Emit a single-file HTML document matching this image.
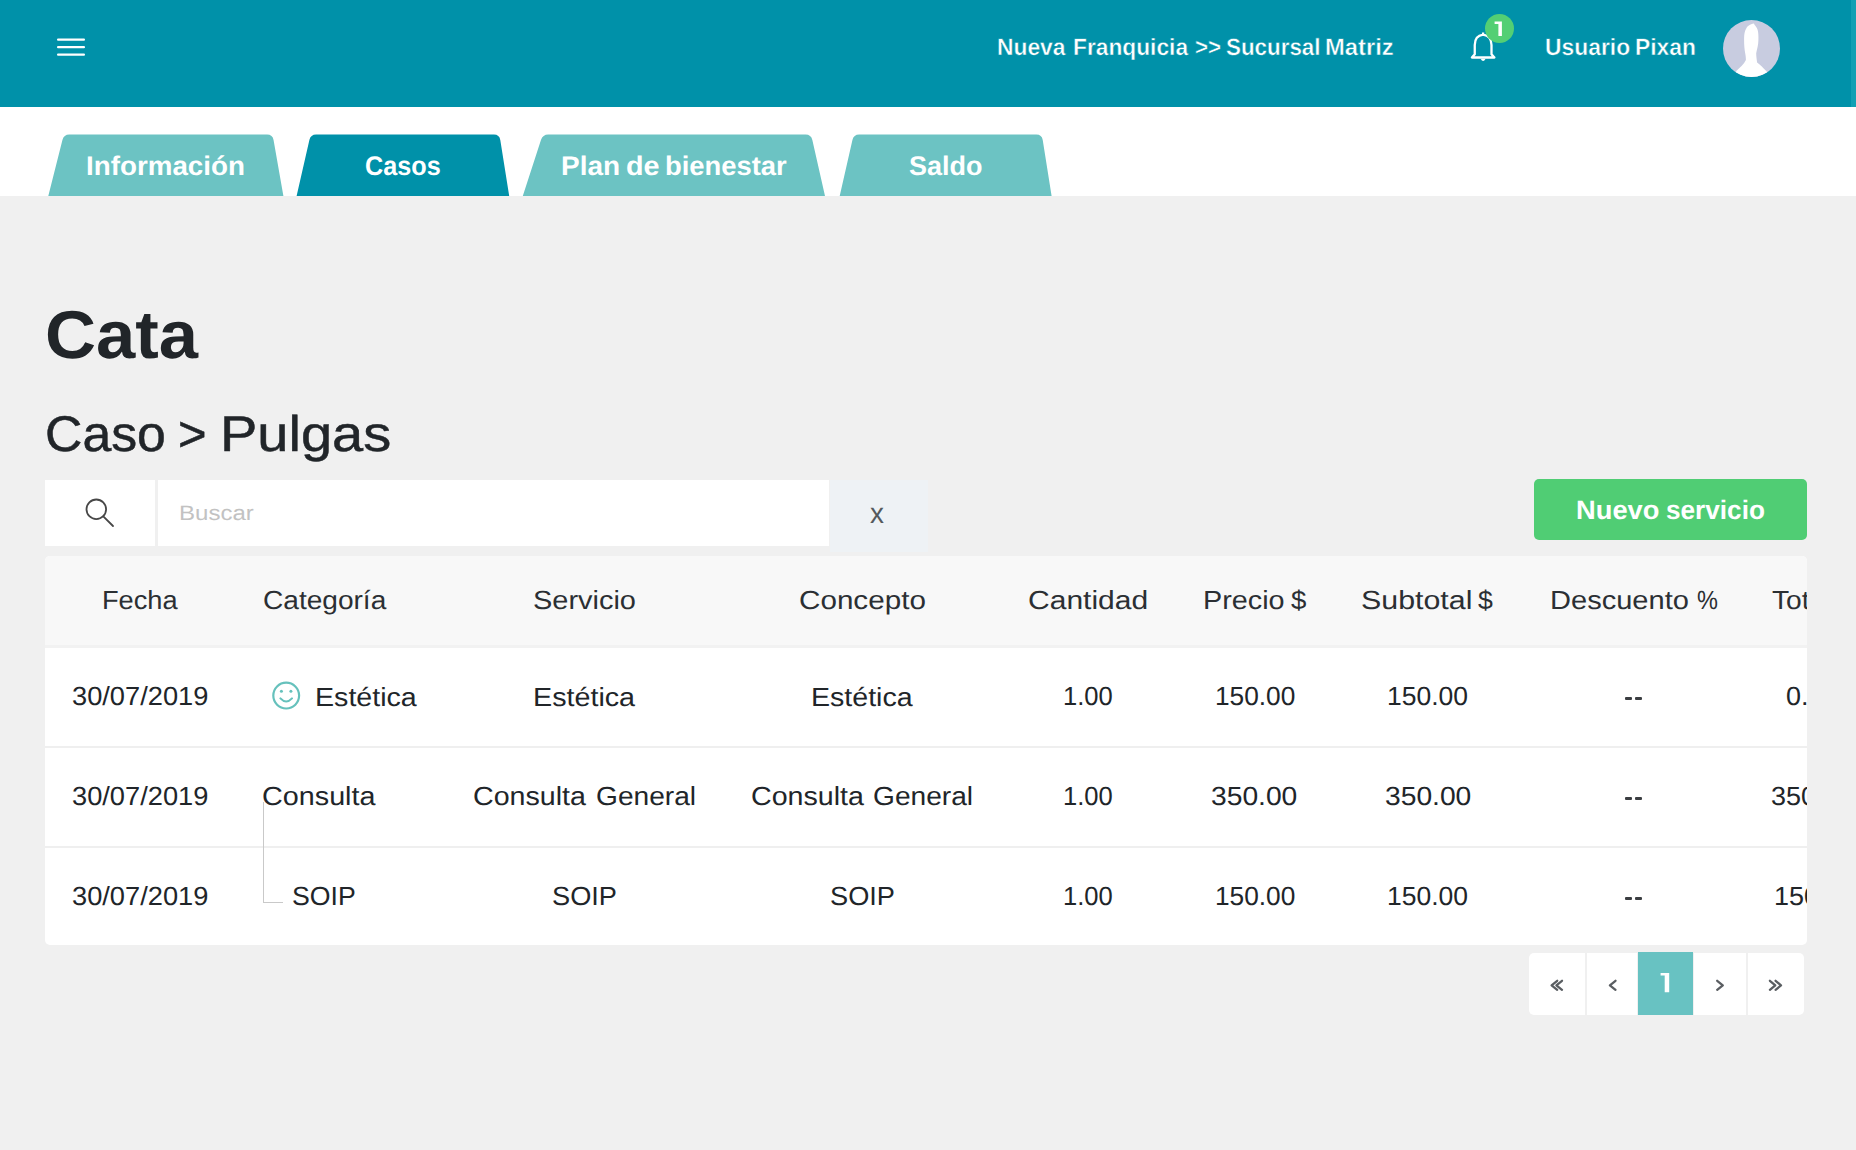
<!DOCTYPE html>
<html><head><meta charset="utf-8"><title>Caso &gt; Pulgas</title>
<style>
html,body{margin:0;padding:0}
body{width:1856px;height:1150px;position:relative;overflow:hidden;background:#f0f0f0;font-family:"Liberation Sans",sans-serif;text-rendering:geometricPrecision}
.abs{position:absolute}
.t{position:absolute;white-space:nowrap;transform-origin:0 0}
.hdr{position:absolute;left:0;top:0;width:1856px;height:106.7px;background:#0091a9}
.hdr-edge{position:absolute;left:1851px;top:0;width:5px;height:106.7px;background:#12a0b4}
.tabbar{position:absolute;left:0;top:106.7px;width:1856px;height:89.3px;background:#fff}
.ham{position:absolute;left:57px;width:27px;height:2.6px;border-radius:1.3px;background:#fff}
.card{position:absolute;left:45px;top:556px;width:1761.5px;height:388.5px;background:#fff;border-radius:5px;overflow:hidden}
.thead{position:absolute;left:0;top:0;width:100%;height:89px;background:#f8f8f8;border-bottom:3px solid #f2f2f2}
.sep{position:absolute;left:0;width:100%;height:1.5px;background:#efefef}
.dash{position:absolute;width:7.2px;height:3.2px;border-radius:1px;background:#3b3e41}
.pg{position:absolute;top:953px;height:62px;background:#fff}
</style></head><body>
<div class="hdr"></div>
<div class="hdr-edge"></div>
<svg class="abs" style="left:50px;top:30px" width="40" height="35" viewBox="0 0 40 35"><g stroke="#fff" stroke-width="2.3" stroke-linecap="round"><line x1="8.1" y1="9.7" x2="33.9" y2="9.7"/><line x1="8.1" y1="17.2" x2="33.9" y2="17.2"/><line x1="8.1" y1="24.7" x2="33.9" y2="24.7"/></g></svg>
<svg class="abs" style="left:1465px;top:28px" width="40" height="40" viewBox="0 0 40 40">
  <path d="M18.1,4.6 L18.1,6.6 C13,7.3 9.75,11 9.75,17 L9.75,26.2 L6.9,29.5 L29.4,29.5 L26.5,26.2 L26.5,17 C26.5,11 23.2,7.3 18.1,6.6" fill="none" stroke="#fff" stroke-width="2.3" stroke-linejoin="round"/>
  <path d="M15.6,30.8 Q18.1,35.2 20.6,30.8 Z" fill="#fff"/>
</svg>
<svg class="abs" style="left:1485px;top:13.6px" width="29" height="29" viewBox="0 0 29 29"><circle cx="14.5" cy="14.5" r="14.5" fill="#53cf74"/>
  <path d="M9.6,7.4 L16.9,7.4 L16.9,22.1 L13.4,22.1 L13.4,10.1 L9.6,10.1 Z" fill="#fff"/></svg>
<svg class="abs" style="left:1723px;top:19.5px" width="57" height="57" viewBox="0 0 57 57">
  <defs><clipPath id="avc"><circle cx="28.5" cy="28.5" r="28.5"/></clipPath></defs>
  <circle cx="28.5" cy="28.5" r="28.5" fill="#c8cce0"/>
  <path clip-path="url(#avc)" d="M31,3.4 C27,4 24.1,6.3 23.5,8 C21.6,11 21.2,14 21.1,18 C21,24 21.4,29 22.2,33.2 C22.8,36.5 22.9,38.5 22.9,40 C21,44 17,47.5 13.5,50.7 L10,60 L48,60 L43.5,51.3 C40,48 37,44.5 34.1,42.6 C33.6,38.5 33.2,36 33.2,33.2 C34,29 35.4,25 35.4,20 C35.5,15 35.4,12.5 34.5,9.5 C33.8,7.5 32.6,6 31.6,5 Z" fill="#fff"/>
</svg>
<div class="tabbar"></div>
<svg class="abs" style="left:0;top:0" width="1856" height="200" viewBox="0 0 1856 200"><path d="M48.3,196 L62.43,140.0 Q63.82,134.5 69.32,134.5 L267.09,134.5 Q272.59,134.5 273.55,140.0 L283.4,196 Z" fill="#6cc3c3"/><path d="M296.6,196 L309.38,140.0 Q310.63,134.5 316.13,134.5 L493.92,134.5 Q499.42,134.5 500.29,140.0 L509.2,196 Z" fill="#0091a9"/><path d="M522.8,196 L540.96,140.0 Q542.75,134.5 548.25,134.5 L805.60,134.5 Q811.10,134.5 812.34,140.0 L825.0,196 Z" fill="#6cc3c3"/><path d="M839.7,196 L852.43,140.0 Q853.69,134.5 859.19,134.5 L1036.35,134.5 Q1041.85,134.5 1042.72,140.0 L1051.6,196 Z" fill="#6cc3c3"/></svg>
<div class="abs" style="left:44.6px;top:480.2px;width:110px;height:66.3px;background:#fff"></div>
<svg class="abs" style="left:80px;top:494px" width="40" height="40" viewBox="0 0 40 40">
  <circle cx="16.3" cy="15.3" r="9.8" fill="none" stroke="#474747" stroke-width="1.8"/>
  <line x1="23.3" y1="22.3" x2="33" y2="32" stroke="#474747" stroke-width="1.8" stroke-linecap="round"/>
</svg>
<div class="abs" style="left:157.8px;top:480.2px;width:671px;height:66px;background:#fff"></div>
<div class="abs" style="left:830px;top:479.7px;width:97.7px;height:72px;background:#eef2f5"></div>
<div class="abs" style="left:1534px;top:478.6px;width:272.5px;height:61.4px;background:#50cd74;border-radius:5px"></div>
<div class="t" style="left:996.94px;top:37.10px;font-size:23.6px;line-height:23.6px;font-weight:bold;-webkit-text-stroke:0.45px #0091a9;color:#ffffff;transform:scaleX(0.9675)">Nueva</div><div class="t" style="left:1072.75px;top:37.10px;font-size:23.6px;line-height:23.6px;font-weight:bold;-webkit-text-stroke:0.45px #0091a9;color:#ffffff;transform:scaleX(0.9642)">Franquicia</div><div class="t" style="left:1194.86px;top:37.10px;font-size:23.6px;line-height:23.6px;font-weight:bold;-webkit-text-stroke:0.45px #0091a9;color:#ffffff;transform:scaleX(0.9434)">>></div><div class="t" style="left:1225.99px;top:37.10px;font-size:23.6px;line-height:23.6px;font-weight:bold;-webkit-text-stroke:0.45px #0091a9;color:#ffffff;transform:scaleX(0.9479)">Sucursal</div><div class="t" style="left:1325.28px;top:37.10px;font-size:23.6px;line-height:23.6px;font-weight:bold;-webkit-text-stroke:0.45px #0091a9;color:#ffffff;transform:scaleX(1.0074)">Matriz</div><div class="t" style="left:1544.88px;top:37.20px;font-size:23.6px;line-height:23.6px;font-weight:bold;-webkit-text-stroke:0.45px #0091a9;color:#ffffff;transform:scaleX(0.9687)">Usuario</div><div class="t" style="left:1634.84px;top:37.20px;font-size:23.6px;line-height:23.6px;font-weight:bold;-webkit-text-stroke:0.45px #0091a9;color:#ffffff;transform:scaleX(0.9679)">Pixan</div><div class="t" style="left:86.17px;top:152.50px;font-size:26.9px;line-height:26.9px;font-weight:bold;color:#ffffff;transform:scaleX(1.0326)">Información</div><div class="t" style="left:365.12px;top:152.50px;font-size:26.9px;line-height:26.9px;font-weight:bold;color:#ffffff;transform:scaleX(0.9376)">Casos</div><div class="t" style="left:560.96px;top:152.50px;font-size:26.9px;line-height:26.9px;font-weight:bold;color:#ffffff;transform:scaleX(1.0410)">Plan</div><div class="t" style="left:625.80px;top:152.50px;font-size:26.9px;line-height:26.9px;font-weight:bold;color:#ffffff;transform:scaleX(1.0707)">de</div><div class="t" style="left:665.10px;top:152.50px;font-size:26.9px;line-height:26.9px;font-weight:bold;color:#ffffff;transform:scaleX(1.0183)">bienestar</div><div class="t" style="left:909.14px;top:152.50px;font-size:26.9px;line-height:26.9px;font-weight:bold;color:#ffffff;transform:scaleX(1.0032)">Saldo</div><div class="t" style="left:45.29px;top:302.20px;font-size:67.6px;line-height:67.6px;font-weight:bold;color:#212529;transform:scaleX(1.0450)">Cata</div><div class="t" style="left:44.74px;top:409.20px;font-size:50.1px;line-height:50.1px;-webkit-text-stroke:0.5px #212529;color:#212529;transform:scaleX(1.0336)">Caso</div><div class="t" style="left:178.38px;top:409.20px;font-size:50.1px;line-height:50.1px;-webkit-text-stroke:0.5px #212529;color:#212529;transform:scaleX(0.9748)">></div><div class="t" style="left:219.98px;top:409.20px;font-size:50.1px;line-height:50.1px;-webkit-text-stroke:0.5px #212529;color:#212529;transform:scaleX(1.1178)">Pulgas</div><div class="t" style="left:179.02px;top:504.31px;font-size:20.8px;line-height:20.8px;color:#c2c2c2;transform:scaleX(1.1561)">Buscar</div><div class="t" style="left:869.63px;top:499.50px;font-size:28.7px;line-height:28.7px;color:#555a5e;transform:scaleX(0.9716)">x</div><div class="t" style="left:1576.00px;top:496.80px;font-size:26.7px;line-height:26.7px;font-weight:bold;color:#ffffff;transform:scaleX(1.0227)">Nuevo</div><div class="t" style="left:1665.78px;top:496.80px;font-size:26.7px;line-height:26.7px;font-weight:bold;color:#ffffff;transform:scaleX(0.9806)">servicio</div>
<div class="card">
  <div class="thead"></div>
  <div class="sep" style="top:190px"></div>
  <div class="sep" style="top:290px"></div>
  <svg class="abs" style="left:226px;top:125.39999999999998px" width="30" height="30" viewBox="0 0 30 30">
    <circle cx="15.2" cy="14.6" r="12.9" fill="none" stroke="#66c1bc" stroke-width="2.2"/>
    <circle cx="10.4" cy="10.2" r="1.5" fill="#66c1bc"/>
    <circle cx="19.9" cy="10.2" r="1.5" fill="#66c1bc"/>
    <path d="M9.4,17.4 Q15.2,23.6 21,17.4" fill="none" stroke="#66c1bc" stroke-width="2.1" stroke-linecap="round"/>
  </svg>
  <div class="abs" style="left:218px;top:246px;width:1.3px;height:100.5px;background:#c9c9c9"></div>
  <div class="abs" style="left:218px;top:345.5px;width:20px;height:1.3px;background:#c9c9c9"></div>
  <div class="t" style="left:56.79px;top:31.10px;font-size:26.2px;line-height:26.2px;color:#2b2f33;transform:scaleX(1.0388)">Fecha</div><div class="t" style="left:217.99px;top:31.10px;font-size:26.2px;line-height:26.2px;color:#2b2f33;transform:scaleX(1.0720)">Categoría</div><div class="t" style="left:488.34px;top:31.10px;font-size:26.2px;line-height:26.2px;color:#2b2f33;transform:scaleX(1.1054)">Servicio</div><div class="t" style="left:753.81px;top:31.10px;font-size:26.2px;line-height:26.2px;color:#2b2f33;transform:scaleX(1.1318)">Concepto</div><div class="t" style="left:983.19px;top:31.10px;font-size:26.2px;line-height:26.2px;color:#2b2f33;transform:scaleX(1.1469)">Cantidad</div><div class="t" style="left:1157.87px;top:31.10px;font-size:26.2px;line-height:26.2px;color:#2b2f33;transform:scaleX(1.0996)">Precio</div><div class="t" style="left:1245.97px;top:31.10px;font-size:26.2px;line-height:26.2px;color:#2b2f33;transform:scaleX(1.0552)">$</div><div class="t" style="left:1316.16px;top:31.10px;font-size:26.2px;line-height:26.2px;color:#2b2f33;transform:scaleX(1.1591)">Subtotal</div><div class="t" style="left:1433.48px;top:31.10px;font-size:26.2px;line-height:26.2px;color:#2b2f33;transform:scaleX(1.0188)">$</div><div class="t" style="left:1504.65px;top:31.10px;font-size:26.2px;line-height:26.2px;color:#2b2f33;transform:scaleX(1.1096)">Descuento</div><div class="t" style="left:1651.53px;top:31.10px;font-size:26.2px;line-height:26.2px;color:#2b2f33;transform:scaleX(0.8995)">%</div><div class="t" style="left:1726.72px;top:31.10px;font-size:26.2px;line-height:26.2px;color:#2b2f33;transform:scaleX(1.0761)">Total $</div><div class="t" style="left:26.70px;top:127.20px;font-size:26.2px;line-height:26.2px;color:#212529;transform:scaleX(1.0402)">30/07/2019</div><div class="t" style="left:26.70px;top:227.40px;font-size:26.2px;line-height:26.2px;color:#212529;transform:scaleX(1.0402)">30/07/2019</div><div class="t" style="left:26.70px;top:327.30px;font-size:26.2px;line-height:26.2px;color:#212529;transform:scaleX(1.0402)">30/07/2019</div><div class="t" style="left:270.49px;top:128.40px;font-size:26.2px;line-height:26.2px;color:#212529;transform:scaleX(1.0922)">Estética</div><div class="t" style="left:488.28px;top:127.50px;font-size:26.2px;line-height:26.2px;color:#212529;transform:scaleX(1.0955)">Estética</div><div class="t" style="left:765.89px;top:127.50px;font-size:26.2px;line-height:26.2px;color:#212529;transform:scaleX(1.0911)">Estética</div><div class="t" style="left:217.45px;top:227.40px;font-size:26.2px;line-height:26.2px;color:#212529;transform:scaleX(1.0980)">Consulta</div><div class="t" style="left:428.46px;top:227.40px;font-size:26.2px;line-height:26.2px;color:#212529;transform:scaleX(1.0931)">Consulta</div><div class="t" style="left:550.51px;top:227.40px;font-size:26.2px;line-height:26.2px;color:#212529;transform:scaleX(1.0742)">General</div><div class="t" style="left:706.36px;top:227.40px;font-size:26.2px;line-height:26.2px;color:#212529;transform:scaleX(1.0931)">Consulta</div><div class="t" style="left:828.41px;top:227.40px;font-size:26.2px;line-height:26.2px;color:#212529;transform:scaleX(1.0742)">General</div><div class="t" style="left:246.67px;top:327.30px;font-size:26.2px;line-height:26.2px;color:#212529;transform:scaleX(1.0181)">SOIP</div><div class="t" style="left:507.14px;top:327.30px;font-size:26.2px;line-height:26.2px;color:#212529;transform:scaleX(1.0382)">SOIP</div><div class="t" style="left:784.94px;top:327.30px;font-size:26.2px;line-height:26.2px;color:#212529;transform:scaleX(1.0382)">SOIP</div><div class="t" style="left:1017.94px;top:127.20px;font-size:26.2px;line-height:26.2px;color:#212529;transform:scaleX(0.9756)">1.00</div><div class="t" style="left:1017.94px;top:227.40px;font-size:26.2px;line-height:26.2px;color:#212529;transform:scaleX(0.9756)">1.00</div><div class="t" style="left:1017.94px;top:327.30px;font-size:26.2px;line-height:26.2px;color:#212529;transform:scaleX(0.9756)">1.00</div><div class="t" style="left:1169.59px;top:127.20px;font-size:26.2px;line-height:26.2px;color:#212529;transform:scaleX(1.0029)">150.00</div><div class="t" style="left:1342.47px;top:127.20px;font-size:26.2px;line-height:26.2px;color:#212529;transform:scaleX(1.0106)">150.00</div><div class="t" style="left:1166.16px;top:227.40px;font-size:26.2px;line-height:26.2px;color:#212529;transform:scaleX(1.0777)">350.00</div><div class="t" style="left:1339.66px;top:227.40px;font-size:26.2px;line-height:26.2px;color:#212529;transform:scaleX(1.0777)">350.00</div><div class="t" style="left:1169.59px;top:327.30px;font-size:26.2px;line-height:26.2px;color:#212529;transform:scaleX(1.0029)">150.00</div><div class="t" style="left:1342.47px;top:327.30px;font-size:26.2px;line-height:26.2px;color:#212529;transform:scaleX(1.0106)">150.00</div><div class="t" style="left:1741.46px;top:127.20px;font-size:26.2px;line-height:26.2px;color:#212529;transform:scaleX(1.0304)">0.00</div><div class="t" style="left:1725.71px;top:227.40px;font-size:26.2px;line-height:26.2px;color:#212529;transform:scaleX(1.0304)">350.00</div><div class="t" style="left:1728.74px;top:327.30px;font-size:26.2px;line-height:26.2px;color:#212529;transform:scaleX(1.0304)">150.00</div>
  <div class="dash" style="left:1579.8px;top:140.5px"></div><div class="dash" style="left:1589.8px;top:140.5px"></div><div class="dash" style="left:1579.8px;top:240.7px"></div><div class="dash" style="left:1589.8px;top:240.7px"></div><div class="dash" style="left:1579.8px;top:340.6px"></div><div class="dash" style="left:1589.8px;top:340.6px"></div>
</div>
<div class="pg" style="left:1528.7px;width:56.3px;border-radius:5px 0 0 5px"></div>
<div class="pg" style="left:1587px;width:50px"></div>
<div class="pg" style="left:1637.8px;width:55.6px;background:#68c2c2;top:952px;height:63px"></div>
<div class="pg" style="left:1694px;width:52.4px"></div>
<div class="pg" style="left:1748px;width:56px;border-radius:0 5px 5px 0"></div>
<svg class="abs" style="left:1540px;top:970px" width="270" height="30" viewBox="0 0 270 30">
  <g fill="none" stroke="#5a5e62" stroke-width="2.3" stroke-linecap="round" stroke-linejoin="round">
    <path d="M17.2,10.8 L11.6,15.3 L17.2,19.8"/><path d="M22,10.8 L16.4,15.3 L22,19.8"/>
    <path d="M75.5,10.8 L69.9,15.3 L75.5,19.8"/>
    <path d="M177.2,10.8 L182.8,15.3 L177.2,19.8"/>
    <path d="M229.9,10.8 L235.3,15.3 L229.9,19.8"/><path d="M235.6,10.8 L241,15.3 L235.6,19.8"/>
  </g>
  <path d="M120.6,3 L129.2,3 L129.2,22.3 L124.7,22.3 L124.7,5.6 L120.6,5.6 Z" fill="#fff"/>
</svg>
</body></html>
